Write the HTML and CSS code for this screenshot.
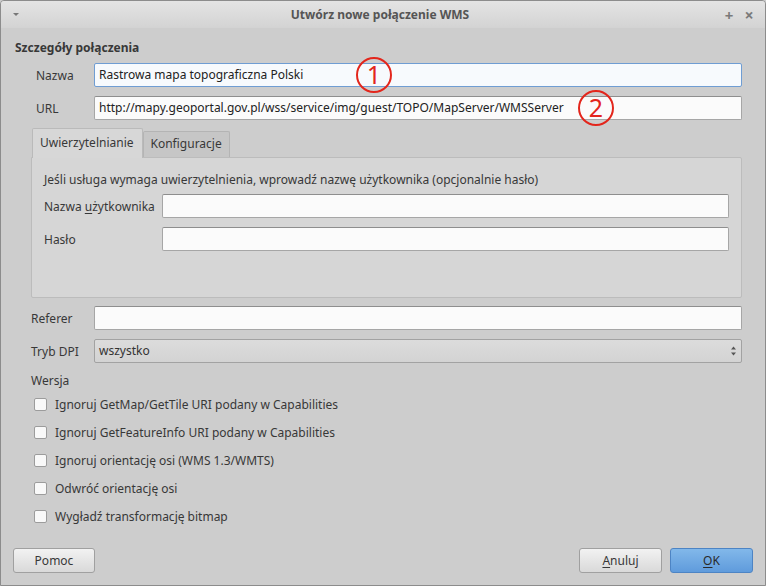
FILE: index.html
```html
<!DOCTYPE html>
<html lang="pl">
<head>
<meta charset="utf-8">
<title>Utwórz nowe połączenie WMS</title>
<link rel="stylesheet" href="styles.css">
</head>
<body>
<div class="window">
  <div class="titlebar">
    <span class="tb-menu"></span>
    <div class="tb-title">Utwórz nowe połączenie WMS</div>
    <span class="tb-btn tb-plus">+</span>
    <span class="tb-btn tb-close">×</span>
  </div>
  <div class="content">
    <div class="group-title">Szczegóły połączenia</div>
    <div class="form">
      <div class="row indent">
        <span class="lbl">Nazwa</span>
        <div class="input focus">Rastrowa mapa topograficzna Polski<span class="mark mark1">1</span></div>
      </div>
      <div class="row indent">
        <span class="lbl">URL</span>
        <div class="input">http://mapy.geoportal.gov.pl/wss/service/img/guest/TOPO/MapServer/WMSServer<span class="mark mark2">2</span></div>
      </div>
    </div>

    <div class="tabs">
      <div class="tabbar">
        <div class="tab active">Uwierzytelnianie</div>
        <div class="tab">Konfiguracje</div>
      </div>
      <div class="pane">
        <div class="pane-text">Jeśli usługa wymaga uwierzytelnienia, wprowadź nazwę użytkownika (opcjonalnie hasło)</div>
        <div class="pane-row"><span class="plbl">Nazwa <u>u</u>żytkownika</span><div class="input"></div></div>
        <div class="pane-row"><span class="plbl">Hasło</span><div class="input"></div></div>
      </div>
    </div>

    <div class="form form2">
      <div class="row">
        <span class="lbl">Referer</span>
        <div class="input"></div>
      </div>
      <div class="row">
        <span class="lbl">Tryb DPI</span>
        <div class="combo">wszystko
          <svg class="spin" width="7" height="12" viewBox="0 0 7 12"><path d="M3.5 1.5 L6 4.5 L1 4.5 Z" fill="#555"/><path d="M3.5 10.5 L6 7.5 L1 7.5 Z" fill="#555"/></svg>
        </div>
      </div>
    </div>

    <div class="version">Wersja</div>
    <div class="checks">
      <div class="check"><span class="box"></span>Ignoruj GetMap/GetTile URI podany w Capabilities</div>
      <div class="check"><span class="box"></span>Ignoruj GetFeatureInfo URI podany w Capabilities</div>
      <div class="check"><span class="box"></span>Ignoruj orientację osi (WMS 1.3/WMTS)</div>
      <div class="check"><span class="box"></span>Odwróć orientację osi</div>
      <div class="check"><span class="box"></span>Wygładź transformację bitmap</div>
    </div>

    <div class="buttons">
      <button class="btn">Pomoc</button>
      <span class="spacer"></span>
      <button class="btn wide"><u>A</u>nuluj</button>
      <button class="btn wide primary"><u>O</u>K</button>
    </div>
  </div>
</div>
</body>
</html>
```

FILE: styles.css
```css
* { box-sizing: border-box; }
html, body { margin: 0; padding: 0; }
body {
  width: 766px;
  height: 586px;
  font-family: "Noto Sans", "Open Sans", sans-serif;
  font-size: 12px;
  color: #383838;
  background: #cdcdcd;
}
.window {
  width: 766px;
  height: 586px;
  border: 1px solid #8c8c8c;
  border-radius: 4px 4px 0 0;
  background: #cdcdcd;
  display: flex;
  flex-direction: column;
  overflow: hidden;
}
.titlebar {
  height: 27px;
  flex: none;
  display: flex;
  align-items: center;
  background: linear-gradient(#e4e4e4, #d3d3d3);
  position: relative;
}
.tb-menu {
  width: 0; height: 0;
  margin-left: 12px;
  border-left: 3px solid transparent;
  border-right: 3px solid transparent;
  border-top: 3px solid #777;
}
.tb-title {
  flex: 1;
  text-align: center;
  font-weight: bold;
  color: #555;
  padding-left: 22px;
}
.tb-btn {
  color: #7a7a7a;
  font-weight: bold;
  font-size: 15px;
  width: 20px;
  text-align: center;
}
.tb-plus { margin-right: 0; }
.tb-close { margin-right: 6px; font-size: 16px; }

.content {
  flex: 1;
  display: flex;
  flex-direction: column;
  padding: 11px 12px 12px 12px;
}
.group-title {
  font-weight: bold;
  line-height: 17px;
  margin-left: 2px;
  color: #383838;
}
.form {
  margin: 7px 11px 0 18px;
  display: flex;
  flex-direction: column;
  gap: 9px;
}
.row {
  display: flex;
  align-items: center;
  height: 24px;
}
.lbl {
  width: 63px;
  flex: none;
}
.row.indent .lbl { padding-left: 5px; }
.input {
  flex: 1;
  height: 24px;
  border: 1px solid #a6a6a6;
  border-top-color: #8e8e8e;
  border-radius: 2px;
  background: #fbfbfb;
  padding: 0 4px;
  line-height: 22px;
  white-space: nowrap;
  position: relative;
  color: #222;
}
.input.focus {
  border-color: #6f9dd3;
  background: #f7fafd;
}
.mark {
  position: absolute;
  top: 50%;
  width: 36px;
  height: 36px;
  margin-top: -18px;
  border: 2px solid #e3261c;
  border-radius: 50%;
  color: #e3261c;
  font-size: 25px;
  line-height: 31px;
  text-align: center;
}
.mark1 { left: 261px; }
.mark2 { left: 483px; }

.tabs {
  margin: 8px 11px 0 18px;
}
.tabbar {
  display: flex;
  align-items: flex-end;
  height: 29px;
  padding-left: 1px;
}
.tab {
  height: 26px;
  line-height: 24px;
  padding: 0 7px;
  border: 1px solid #b4b4b4;
  border-bottom: none;
  border-radius: 2px 2px 0 0;
  background: #c6c6c6;
  color: #383838;
}
.tab.active {
  height: 30px;
  line-height: 28px;
  padding: 0 8px 0 7px;
  background: #d7d7d7;
  border-color: #bababa;
  margin-bottom: -1px;
  position: relative;
  z-index: 1;
}
.pane {
  height: 141px;
  border: 1px solid #bcbcbc;
  border-radius: 0 2px 2px 2px;
  background: #d6d6d6;
  padding: 13px 12px 0 12px;
}
.pane-text { line-height: 17px; }
.pane-row {
  display: flex;
  align-items: center;
  height: 24px;
  margin-top: 6px;
}
.pane-row + .pane-row { margin-top: 9px; }
.plbl { width: 118px; flex: none; }
.plbl u { text-decoration-thickness: 1px; text-underline-offset: 2px; }

.form2 { margin-top: 8px; }
.combo {
  flex: 1;
  height: 24px;
  border: 1px solid #a2a2a2;
  border-radius: 2px;
  background: linear-gradient(#dcdcdc, #d3d3d3);
  padding: 0 4px;
  line-height: 22px;
  display: flex;
  align-items: center;
  justify-content: space-between;
  color: #333;
}
.spin { margin-right: 0px; }

.version {
  margin: 9px 0 0 18px;
  line-height: 17px;
}
.checks {
  margin: 1px 0 0 21px;
  display: flex;
  flex-direction: column;
}
.check {
  height: 28px;
  display: flex;
  align-items: center;
}
.box {
  width: 13px;
  height: 13px;
  border: 1px solid #9c9c9c;
  border-radius: 2px;
  background: #f9f9f9;
  margin-right: 8px;
  flex: none;
}

.buttons {
  margin-top: auto;
  display: flex;
  align-items: center;
  gap: 8px;
}
.spacer { flex: 1; }
.btn {
  width: 82px;
  height: 25px;
  font-family: inherit;
  font-size: 12px;
  color: #383838;
  border: 1px solid #a0a0a0;
  border-radius: 3px;
  background: linear-gradient(#f2f2f2, #d9d9d9);
  padding: 0;
}
.btn.wide { width: 83px; }
.btn u { text-decoration-thickness: 1px; text-underline-offset: 2px; }
.btn.primary {
  background: linear-gradient(#82b8ea, #5f9bdc);
  border-color: #4d84c4;
  color: #2a2a2a;
}
```
